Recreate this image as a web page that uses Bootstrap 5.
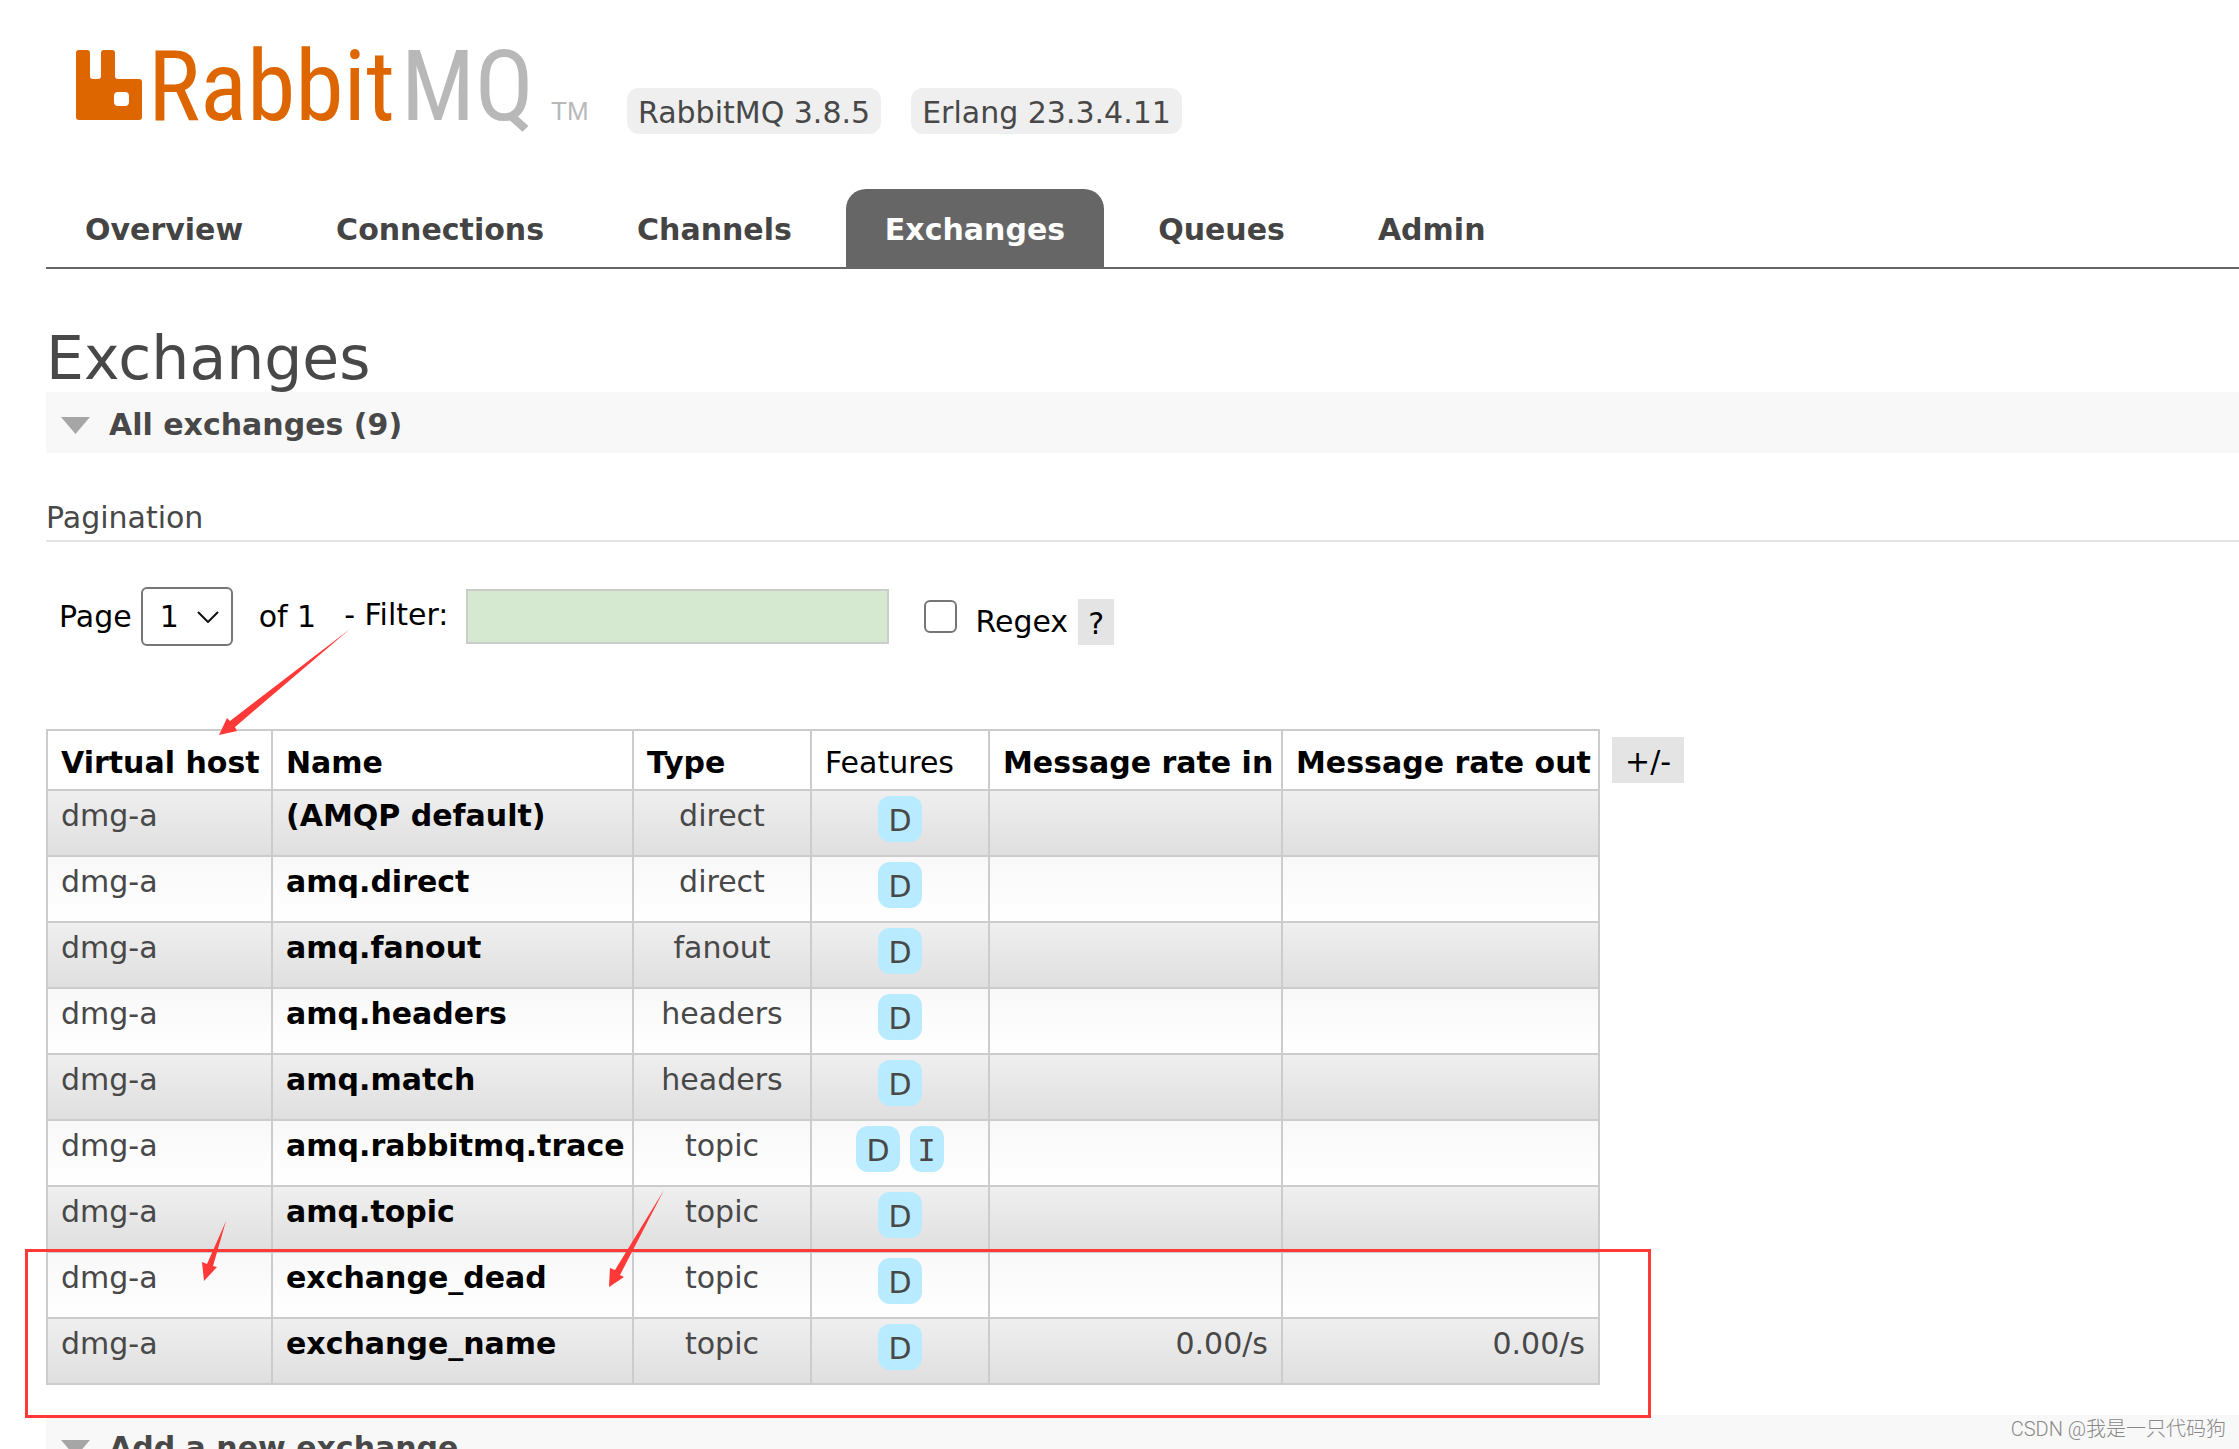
<!DOCTYPE html>
<html lang="en">
<head>
<meta charset="utf-8">
<meta name="viewport" content="width=device-width, initial-scale=1">
<title>RabbitMQ Management</title>
<link href="https://cdn.jsdelivr.net/npm/bootstrap@5.3.0/dist/css/bootstrap.min.css" rel="stylesheet">
<style>
  body { font: 30px/36px "DejaVu Sans", Verdana, sans-serif; color: #484848; background: #fff; height: 100vh; }
  .page { padding-left: 46px; }
  .brand-row { padding: 26px 0 55px 28px; }
  .brand-link { margin-right: 33px; }
  .brand-logo { margin-bottom: -10px; width: 520px; height: 118px; }
  .brand-logo .wordmark { font-family: "Roboto Condensed", "Open Sans Condensed", "Liberation Sans Narrow", Roboto, sans-serif; font-size: 98px; }
  .brand-logo .tm { font-family: "Liberation Sans", sans-serif; font-size: 26px; }
  .version-tag, .feature-tag { padding: 4px 10px 0; line-height: 42px; border-radius: 12px; }
  .version-tag { background: #efefef; padding-left: 11px; padding-right: 11px; }
  .version-tag + .version-tag { margin-left: 30px; }
  .feature-tag { background: #b8ebff; display: inline-block; }
  .feature-tag + .feature-tag { margin-left: 10px; }
  .feature-tag.serifed { font-family: "DejaVu Sans Mono", monospace; padding-left: 8px; padding-right: 8px; }
  .main-tabs { gap: 15px; border-bottom: 2px solid #666; }
  .main-tabs .nav-link { padding: 19px 39px 15px; line-height: 44px; font-weight: bold; color: #444; border-radius: 20px 20px 0 0; }
  .main-tabs .nav-link.active { background: #666; color: #fff; }
  h1.page-title { font-size: 60px; line-height: 60px; font-weight: normal; margin: 59px 0 4px; }
  .section-bar { background: #f8f8f8; font-size: 30px; line-height: 36px; font-weight: bold; padding: 15px 0 10px 15px; margin: 0; gap: 19px; }
  .section-bar.next-section { margin-top: 30px; }
  .sub-title { font-size: 30px; line-height: 36px; font-weight: normal; margin: 47px 0 45px; padding-bottom: 4px; border-bottom: 2px solid #e4e4e4; }
  .filter-row { color: #000; padding-left: 13px; }
  .page-pick { width: 92px; height: 59px; border: 2px solid #767676; border-radius: 6px; padding: 0 0 0 17px; margin: 0 26px 0 9px; font: inherit; color: #000; background: #fff url("data:image/svg+xml,%3Csvg xmlns='http://www.w3.org/2000/svg' width='22' height='12' fill='none' stroke='%23111' stroke-width='2'%3E%3Cpath d='M1 1l10 10L21 1'/%3E%3C/svg%3E") no-repeat right 12px center; appearance: none; }
  .filter-label { padding-bottom: 3px; margin: 0 18px 0 28px; }
  .filter-box { width: 423px; height: 55px; border: 2px solid #ccc; background: #d5e8d0; font: inherit; padding: 0 8px; }
  .regex-tick { appearance: none; width: 33px; height: 33px; border: 2px solid #767676; border-radius: 6px; background: #fff; margin: 0 18px 0 35px; }
  .regex-group { padding-top: 10px; gap: 10px; }
  .plain-btn { border: 0; background: #e4e4e4; color: #000; font: inherit; line-height: 42px; padding: 4px 10px 0; }
  .table-row { margin-top: 83px; gap: 12px; }
  .table-row .plain-btn { margin-top: 8px; padding-left: 13px; padding-right: 13px; }
  .exchange-table { table-layout: fixed; width: 1554px; border-collapse: collapse; }
  .exchange-table th, .exchange-table td { border: 2px solid #ccc; vertical-align: top; white-space: nowrap; }
  .exchange-table th { padding: 14px 0 8px 13px; color: #000; }
  .exchange-table td { height: 66px; padding: 7px 13px 0; text-align: center; background: linear-gradient(#f8f8f8, #fff); }
  .exchange-table tbody tr:nth-child(odd) td { background: linear-gradient(#efefef, #dfdfdf); }
  .exchange-table td:first-child, .exchange-table td:nth-child(2) { text-align: left; }
  .exchange-table td:nth-child(4) { padding-top: 5px; }
  .exchange-table td:nth-child(5), .exchange-table td:nth-child(6) { text-align: right; }
  .exchange-table a { color: #000; font-weight: bold; text-decoration: none; }
  .marks { left: 0; top: 0; pointer-events: none; }
  .watermark { right: 13px; bottom: 5px; font: 20px/30px Roboto, "Noto Sans CJK SC", sans-serif; font-weight: 300; color: #888; }
</style>
<script src="https://cdn.jsdelivr.net/npm/bootstrap@5.3.0/dist/js/bootstrap.bundle.min.js"></script>
</head>
<body class="position-relative overflow-hidden">
<div class="page">
  <header class="brand-row d-flex align-items-end">
    <a href="#" class="brand-link d-block" aria-label="RabbitMQ home">
      <svg class="brand-logo d-block" viewBox="-2 -20 520 118">
        <path fill="#dd6600" fill-rule="evenodd" d="M3 4h8q3 0 3 3v23q0 3 3 3h5q3 0 3-3V7q0-3 3-3h8q3 0 3 3v23q0 3 3 3h21q3 0 3 3v35q0 3-3 3H3q-3 0-3-3V7q0-3 3-3zM42 46q-4 0-4 4v6q0 4 4 4h7q4 0 4-4v-6q0-4-4-4z"/>
        <text class="wordmark" x="72" y="74" fill="#dd6600">Rabbit</text>
        <text class="wordmark" x="325" y="74" fill="#b8b8b8">MQ</text>
        <text class="tm" x="475" y="74" fill="#b8b8b8">TM</text>
      </svg>
    </a>
    <span class="version-tag">RabbitMQ 3.8.5</span>
    <span class="version-tag">Erlang 23.3.4.11</span>
  </header>

  <nav class="nav main-tabs">
    <a class="nav-link" href="#">Overview</a>
    <a class="nav-link" href="#">Connections</a>
    <a class="nav-link" href="#">Channels</a>
    <a class="nav-link active" aria-current="page" href="#">Exchanges</a>
    <a class="nav-link" href="#">Queues</a>
    <a class="nav-link" href="#">Admin</a>
  </nav>

  <main>
    <h1 class="page-title">Exchanges</h1>
    <h2 class="section-bar d-flex align-items-center">
      <svg width="29" height="17" viewBox="0 0 29 17"><path fill="#a6a6a6" d="M0 0h29L14.500 17z"/></svg>
      All exchanges (9)
    </h2>

    <h3 class="sub-title">Pagination</h3>
    <form class="filter-row d-flex align-items-center">
      <label for="page-pick">Page</label>
      <select id="page-pick" class="page-pick"><option>1</option></select>
      <span>of 1</span>
      <label for="filter-box" class="filter-label">- Filter:</label>
      <input type="text" id="filter-box" class="filter-box">
      <input type="checkbox" id="regex-tick" class="regex-tick">
      <div class="regex-group d-flex align-items-center">
        <label for="regex-tick">Regex</label>
        <button type="button" class="plain-btn">?</button>
      </div>
    </form>

    <div class="table-row d-flex align-items-start">
      <table class="exchange-table">
        <colgroup><col style="width:225px"><col style="width:361px"><col style="width:178px"><col style="width:178px"><col style="width:293px"><col style="width:317px"></colgroup>
        <thead>
          <tr>
            <th><a href="#">Virtual host</a></th>
            <th><a href="#">Name</a></th>
            <th><a href="#">Type</a></th>
            <th class="fw-normal">Features</th>
            <th><a href="#">Message rate in</a></th>
            <th><a href="#">Message rate out</a></th>
          </tr>
        </thead>
        <tbody>
          <tr><td>dmg-a</td><td><a href="#">(AMQP default)</a></td><td>direct</td><td><span class="feature-tag">D</span></td><td></td><td></td></tr>
          <tr><td>dmg-a</td><td><a href="#">amq.direct</a></td><td>direct</td><td><span class="feature-tag">D</span></td><td></td><td></td></tr>
          <tr><td>dmg-a</td><td><a href="#">amq.fanout</a></td><td>fanout</td><td><span class="feature-tag">D</span></td><td></td><td></td></tr>
          <tr><td>dmg-a</td><td><a href="#">amq.headers</a></td><td>headers</td><td><span class="feature-tag">D</span></td><td></td><td></td></tr>
          <tr><td>dmg-a</td><td><a href="#">amq.match</a></td><td>headers</td><td><span class="feature-tag">D</span></td><td></td><td></td></tr>
          <tr><td>dmg-a</td><td><a href="#">amq.rabbitmq.trace</a></td><td>topic</td><td><span class="feature-tag">D</span><span class="feature-tag serifed">I</span></td><td></td><td></td></tr>
          <tr><td>dmg-a</td><td><a href="#">amq.topic</a></td><td>topic</td><td><span class="feature-tag">D</span></td><td></td><td></td></tr>
          <tr><td>dmg-a</td><td><a href="#">exchange_dead</a></td><td>topic</td><td><span class="feature-tag">D</span></td><td></td><td></td></tr>
          <tr><td>dmg-a</td><td><a href="#">exchange_name</a></td><td>topic</td><td><span class="feature-tag">D</span></td><td>0.00/s</td><td>0.00/s</td></tr>
        </tbody>
      </table>
      <button type="button" class="plain-btn">+/-</button>
    </div>

    <h2 class="section-bar next-section d-flex align-items-center">
      <svg width="29" height="17" viewBox="0 0 29 17"><path fill="#a6a6a6" d="M0 0h29L14.500 17z"/></svg>
      Add a new exchange
    </h2>
  </main>
</div>

<!-- hand-drawn callouts over the table -->
<svg class="marks position-absolute" width="1700" height="1440" viewBox="0 0 1700 1440" aria-hidden="true">
  <g fill="#ff3838">
    <path d="M219 735L227 718L230 721L350 629L235 727L237 731z"/>
    <path d="M204 1281L202 1262L207 1264L226 1221L213 1266L217 1267z"/>
    <path d="M609 1287L610 1268L615 1270L664 1190L620 1275L624 1277z"/>
  </g>
  <rect x="26.500" y="1250.500" width="1623" height="166" fill="none" stroke="#ff3838" stroke-width="3"/>
</svg>
<div class="watermark position-absolute">CSDN @我是一只代码狗</div>
</body>
</html>
